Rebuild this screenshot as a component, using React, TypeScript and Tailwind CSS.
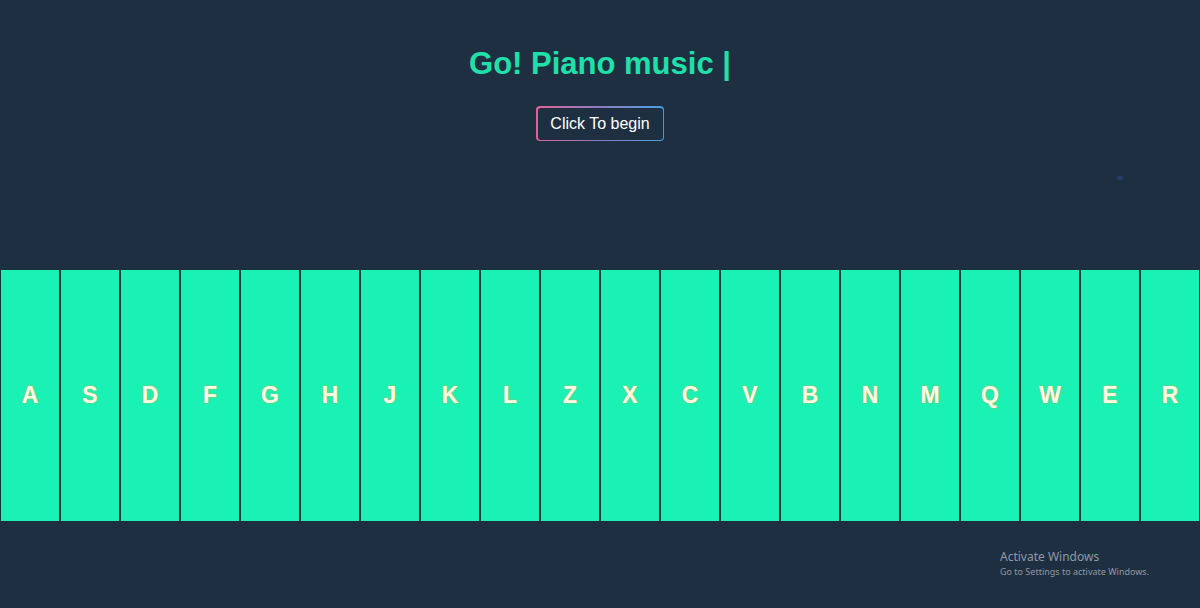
const keys = ["A", "S", "D", "F", "G", "H", "J", "K", "L", "Z", "X", "C", "V", "B", "N", "M", "Q", "W", "E", "R"];

export default function App() {
  return (
    <div className="h-[608px] w-[1200px] overflow-hidden bg-[#1f2f42] font-['Liberation_Sans',Arial,sans-serif] relative">
      <div className="flex flex-col items-center pt-[45px]">
        <h1 className="text-[31px] leading-[37px] font-bold text-[#1fe0a8]">Go! Piano music |</h1>
        <div className="mt-[24px] rounded-[4px] bg-gradient-to-r from-[#e0609a] via-[#8a7ac0] to-[#3aa0e0] p-[1.5px]">
          <button className="h-[32px] w-[125px] rounded-[3px] bg-[#1f2f42] text-[16px] text-white">Click To begin</button>
        </div>
      </div>

      <div className="mt-[129px] flex h-[251px] w-[1200px]">
        {keys.map((k) => (
          <div key={k} className="flex w-[60px] shrink-0 items-center justify-center border-x border-[#0d3b34] bg-[#19f2b4]">
            <span className="text-[23px] font-bold text-[#fffbe6] [text-shadow:0_0_2px_#d9a441]">{k}</span>
          </div>
        ))}
      </div>

      <div className="absolute left-[1117px] top-[176px] h-[4px] w-[6px] rounded-full bg-[#2b4a8a] opacity-60" />

      <div className="absolute left-[1000px] top-[549px] font-['Noto_Sans',sans-serif] text-[#8e99a6]">
        <div className="text-[12px] leading-[16px]">Activate Windows</div>
        <div className="text-[9px] leading-[13px]">Go to Settings to activate Windows.</div>
      </div>
    </div>
  );
}
